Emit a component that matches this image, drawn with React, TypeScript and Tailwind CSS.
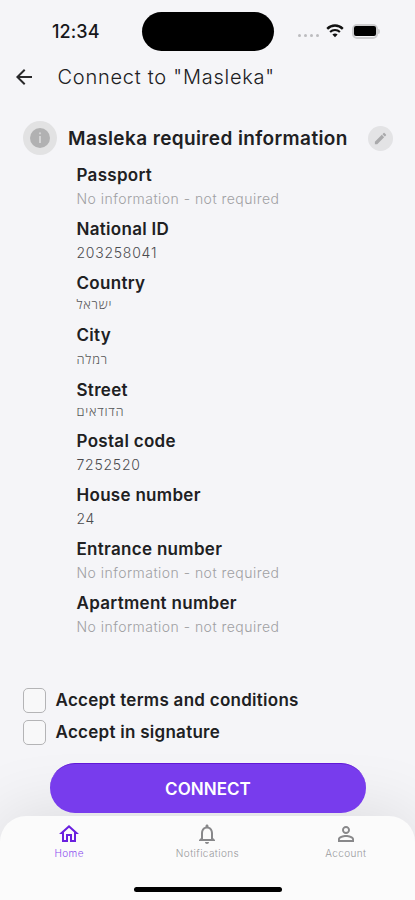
import type { ReactNode } from "react";
import { MdArrowBack, MdEdit, MdNotificationsNone, MdOutlineHome, MdPersonOutline } from "react-icons/md";

type Field = { label: string; value: string; kind?: "empty" | "hebrew"; row: string; gap: string };

const fields: Field[] = [
  { label: "Passport", value: "No information - not required", kind: "empty", row: "h-[54px]", gap: "mt-1" },
  { label: "National ID", value: "203258041", row: "h-[54px]", gap: "mt-1" },
  { label: "Country", value: "ישראל", kind: "hebrew", row: "h-[52px]", gap: "mt-px" },
  { label: "City", value: "רמלה", kind: "hebrew", row: "h-[55px]", gap: "mt-1" },
  { label: "Street", value: "הדודאים", kind: "hebrew", row: "h-[51px]", gap: "mt-px" },
  { label: "Postal code", value: "7252520", row: "h-[54px]", gap: "mt-1" },
  { label: "House number", value: "24", row: "h-[54px]", gap: "mt-1" },
  { label: "Entrance number", value: "No information - not required", kind: "empty", row: "h-[54px]", gap: "mt-1" },
  { label: "Apartment number", value: "No information - not required", kind: "empty", row: "h-[54px]", gap: "mt-1" },
];

function StatusBar() {
  return (
    <div className="flex h-[62px] shrink-0 items-center">
      <span className="ml-[52px] w-[90px] text-[18px] font-medium tracking-[0.1px] text-[#17171a]">12:34</span>
      <div className="h-[39px] w-[132px] rounded-full bg-black" />
      <div className="mt-[9px] ml-6 flex gap-[3px]">
        {[0, 1, 2, 3].map((dot) => (
          <span key={dot} className="size-[3px] rounded-full bg-[#bcbcbf]" />
        ))}
      </div>
      <svg className="ml-[7px] h-[14px] w-[18px]" viewBox="0 0 18 14" fill="none" stroke="#111">
        <path d="M1.2 4.8a11 11 0 0 1 15.6 0" strokeWidth="2.4" />
        <path d="M4.1 8a7 7 0 0 1 9.8 0" strokeWidth="2.1" />
        <path d="M6.4 10.5Q9 8.7 11.6 10.5L9 13.3Z" fill="#111" stroke="none" />
      </svg>
      <div className="ml-[8px] flex h-[15px] w-[26px] items-center rounded-[5px] border-2 border-[#cdcdcf]">
        <span className="h-[10px] w-full rounded-[2px] bg-black" />
      </div>
      <span className="h-[5px] w-[2px] rounded-r-full bg-[#cdcdcf]" />
    </div>
  );
}

function CheckRow({ label }: { label: string }) {
  return (
    <label className="flex h-8 items-center">
      <input
        type="checkbox"
        className="ml-[23px] h-[25px] w-[23px] appearance-none rounded-[5px] border border-[#b4b4b6] bg-[#f8f8f9]"
      />
      <span className="ml-[9.5px] text-[17px] leading-6 font-semibold tracking-[0.27px] text-[#202022]">{label}</span>
    </label>
  );
}

function NavItem({ icon, label, active }: { icon: ReactNode; label: string; active?: boolean }) {
  return (
    <button className={`flex flex-1 flex-col items-center ${active ? "text-[#6a20df]" : "text-[#88888a]"}`}>
      {icon}
      <span className={`mt-[1px] text-[10px] leading-3 font-light tracking-[0.4px] ${active ? "text-[#8b50ef]" : "text-[#99999b]"}`}>
        {label}
      </span>
    </button>
  );
}

export default function App() {
  return (
    <div className="flex h-[900px] w-[415px] flex-col overflow-hidden bg-[#f5f5f8] font-['Inter','Noto_Sans',sans-serif]">
      <StatusBar />
      <header className="flex h-[30px] shrink-0 items-center">
        <MdArrowBack className="ml-3 size-6 text-[#29292b]" />
        <h1 className="ml-[21.5px] text-[20px] leading-7 font-light tracking-[0.75px] text-[#202022]">Connect to "Masleka"</h1>
      </header>
      <main className="flex flex-1 flex-col">
        <div className="mt-[28px] flex h-9 items-center">
          <div className="ml-[23px] flex size-[34px] items-center justify-center rounded-full bg-[#e2e2e3]">
            <div className="flex size-5 items-center justify-center rounded-full bg-[#b1b1b2]">
              <svg className="h-[12px] w-1" viewBox="0 0 4 12" fill="#d3d3d4">
                <circle cx="2" cy="1.3" r="1.1" />
                <path d="M1 4h2v7H1z" />
              </svg>
            </div>
          </div>
          <h2 className="ml-[11px] w-[288px] pt-px text-[19px] leading-7 font-semibold tracking-[0.38px] whitespace-nowrap text-[#202022]">
            Masleka required information
          </h2>
          <button className="ml-3 flex size-[25px] items-center justify-center rounded-full bg-[#e3e3e5]">
            <MdEdit className="size-[15px] text-[#a9a9ab]" />
          </button>
        </div>
        <dl className="mt-[9px] ml-[76.5px]">
          {fields.map((field) => (
            <div key={field.label} className={field.row}>
              <dt className="text-[17px] leading-5 font-semibold tracking-[0.3px] text-[#202022]">{field.label}</dt>
              <dd
                className={`${field.gap} leading-5 ${
                  field.kind === "hebrew"
                    ? "font-['Open_Sans','Noto_Sans','DejaVu_Sans',sans-serif] text-[13px] font-light tracking-[0.8px] text-[#555557]"
                    : field.kind === "empty"
                      ? "text-[14px] font-light tracking-[0.47px] text-[#a0a0a3]"
                      : "text-[14px] font-light tracking-[0.75px] text-[#4b4b4e]"
                }`}
              >
                {field.value}
              </dd>
            </div>
          ))}
        </dl>
        <div className="mt-[37px]">
          <CheckRow label="Accept terms and conditions" />
          <CheckRow label="Accept in signature" />
        </div>
        <button className="relative mt-[15px] ml-[50px] h-[50px] w-[316px] rounded-full border-t border-[#6119d5] bg-[#783ced] pt-0.5 text-[17px] font-semibold tracking-[0.05px] text-white">
          CONNECT
        </button>
      </main>
      <nav className="flex h-[84px] shrink-0 flex-col rounded-t-[26px] bg-[#fbfbfb] shadow-[0_0_70px_rgba(0,0,0,0.12)]">
        <div className="flex pt-[6px]">
          <NavItem active label="Home" icon={<MdOutlineHome className="size-6" />} />
          <NavItem label="Notifications" icon={<MdNotificationsNone className="size-6" />} />
          <NavItem label="Account" icon={<MdPersonOutline className="size-6" />} />
        </div>
        <div className="mx-auto mt-[28px] h-[5px] w-[148px] rounded-full bg-black" />
      </nav>
    </div>
  );
}
